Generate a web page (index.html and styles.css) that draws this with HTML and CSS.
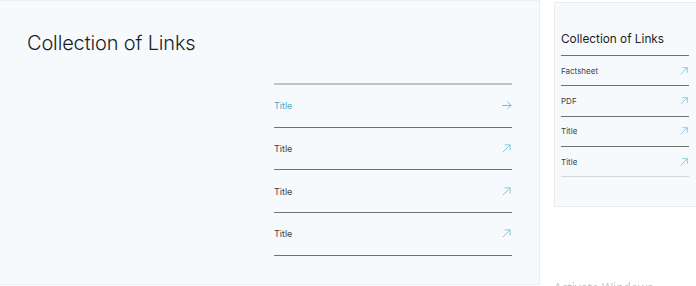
FILE: index.html
```html
<!DOCTYPE html>
<html lang="en">
<head>
    <meta charset="UTF-8">
    <meta name="viewport" content="width=device-width, initial-scale=1.0">
    <title>Collection of Links</title>
    <link rel="stylesheet" href="styles.css">
</head>
<body>
    <div class="page">
        <section class="panel">
            <h1>Collection of Links</h1>
            <ul class="links">
                <li><a href="#" class="link active">Title
                    <svg viewBox="0 0 12 12"><path d="M1 6h10M7 2l4 4-4 4"/></svg></a></li>
                <li><a href="#" class="link">Title
                    <svg viewBox="0 0 12 12"><path d="M2 10L10 2M4 2h6v6"/></svg></a></li>
                <li><a href="#" class="link">Title
                    <svg viewBox="0 0 12 12"><path d="M2 10L10 2M4 2h6v6"/></svg></a></li>
                <li><a href="#" class="link">Title
                    <svg viewBox="0 0 12 12"><path d="M2 10L10 2M4 2h6v6"/></svg></a></li>
            </ul>
        </section>

        <aside class="side">
            <h2>Collection of Links</h2>
            <ul class="side-links">
                <li><a href="#" class="link">Factsheet
                    <svg viewBox="0 0 12 12"><path d="M2 10L10 2M4 2h6v6"/></svg></a></li>
                <li><a href="#" class="link">PDF
                    <svg viewBox="0 0 12 12"><path d="M2 10L10 2M4 2h6v6"/></svg></a></li>
                <li><a href="#" class="link">Title
                    <svg viewBox="0 0 12 12"><path d="M2 10L10 2M4 2h6v6"/></svg></a></li>
                <li><a href="#" class="link">Title
                    <svg viewBox="0 0 12 12"><path d="M2 10L10 2M4 2h6v6"/></svg></a></li>
            </ul>
        </aside>
    </div>

    <div class="watermark">Activate Windows</div>
</body>
</html>
```

FILE: styles.css
```css
* {
    margin: 0;
    padding: 0;
    box-sizing: border-box;
}
body {
    font-family: 'Inter', 'Noto Sans', sans-serif;
    background: #fff;
    color: #222;
    overflow: hidden;
}
ul {
    list-style: none;
}
a {
    text-decoration: none;
    color: inherit;
}
.page {
    display: flex;
    align-items: flex-start;
    gap: 14px;
}
.panel {
    width: 540px;
    height: 285px;
    background: #f6fafd;
    border: 1px solid #eceff2;
    border-left: none;
    padding: 30px 0 0 27px;
}
h1 {
    font-size: 20px;
    font-weight: 300;
    color: #1b1e26;
    letter-spacing: -0.15px;
    height: 52px;
}
.links {
    width: 238px;
    margin-left: 247px;
    border-top: 2px solid #c1c5c9;
}
.links li {
    border-bottom: 1px solid #6f7173;
}
.links .link {
    height: 41.7px;
    font-size: 9px;
}
.link {
    display: flex;
    align-items: center;
    justify-content: space-between;
    color: #3c3f44;
}
.link svg {
    width: 11px;
    height: 11px;
    fill: none;
    stroke: #7ec3d8;
    stroke-width: 1;
}
.link.active {
    color: #4ea6cb;
}
.link.active svg {
    stroke: #6bb6d3;
}
.side {
    width: 142px;
    margin-top: 2px;
    background: #f6fafd;
    border: 1px solid #e9edf0;
    border-right: none;
    padding: 0 7px 29px 6px;
}
h2 {
    font-size: 11.8px;
    font-weight: 400;
    color: #1b1e26;
    height: 52px;
    padding-top: 29px;
}
.side-links {
    border-top: 1px solid #6f7173;
}
.side-links li {
    border-bottom: 1px solid #6f7173;
}
.side-links li:last-child {
    border-bottom-color: #d3d8dc;
}
.side-links .link {
    height: 29.3px;
    font-size: 8px;
}
.side-links .link svg {
    width: 10px;
    height: 10px;
}
.watermark {
    position: fixed;
    left: 554px;
    top: 279px;
    font-family: 'Noto Sans', sans-serif;
    font-size: 12px;
    color: #c4c6c8;
}
```
